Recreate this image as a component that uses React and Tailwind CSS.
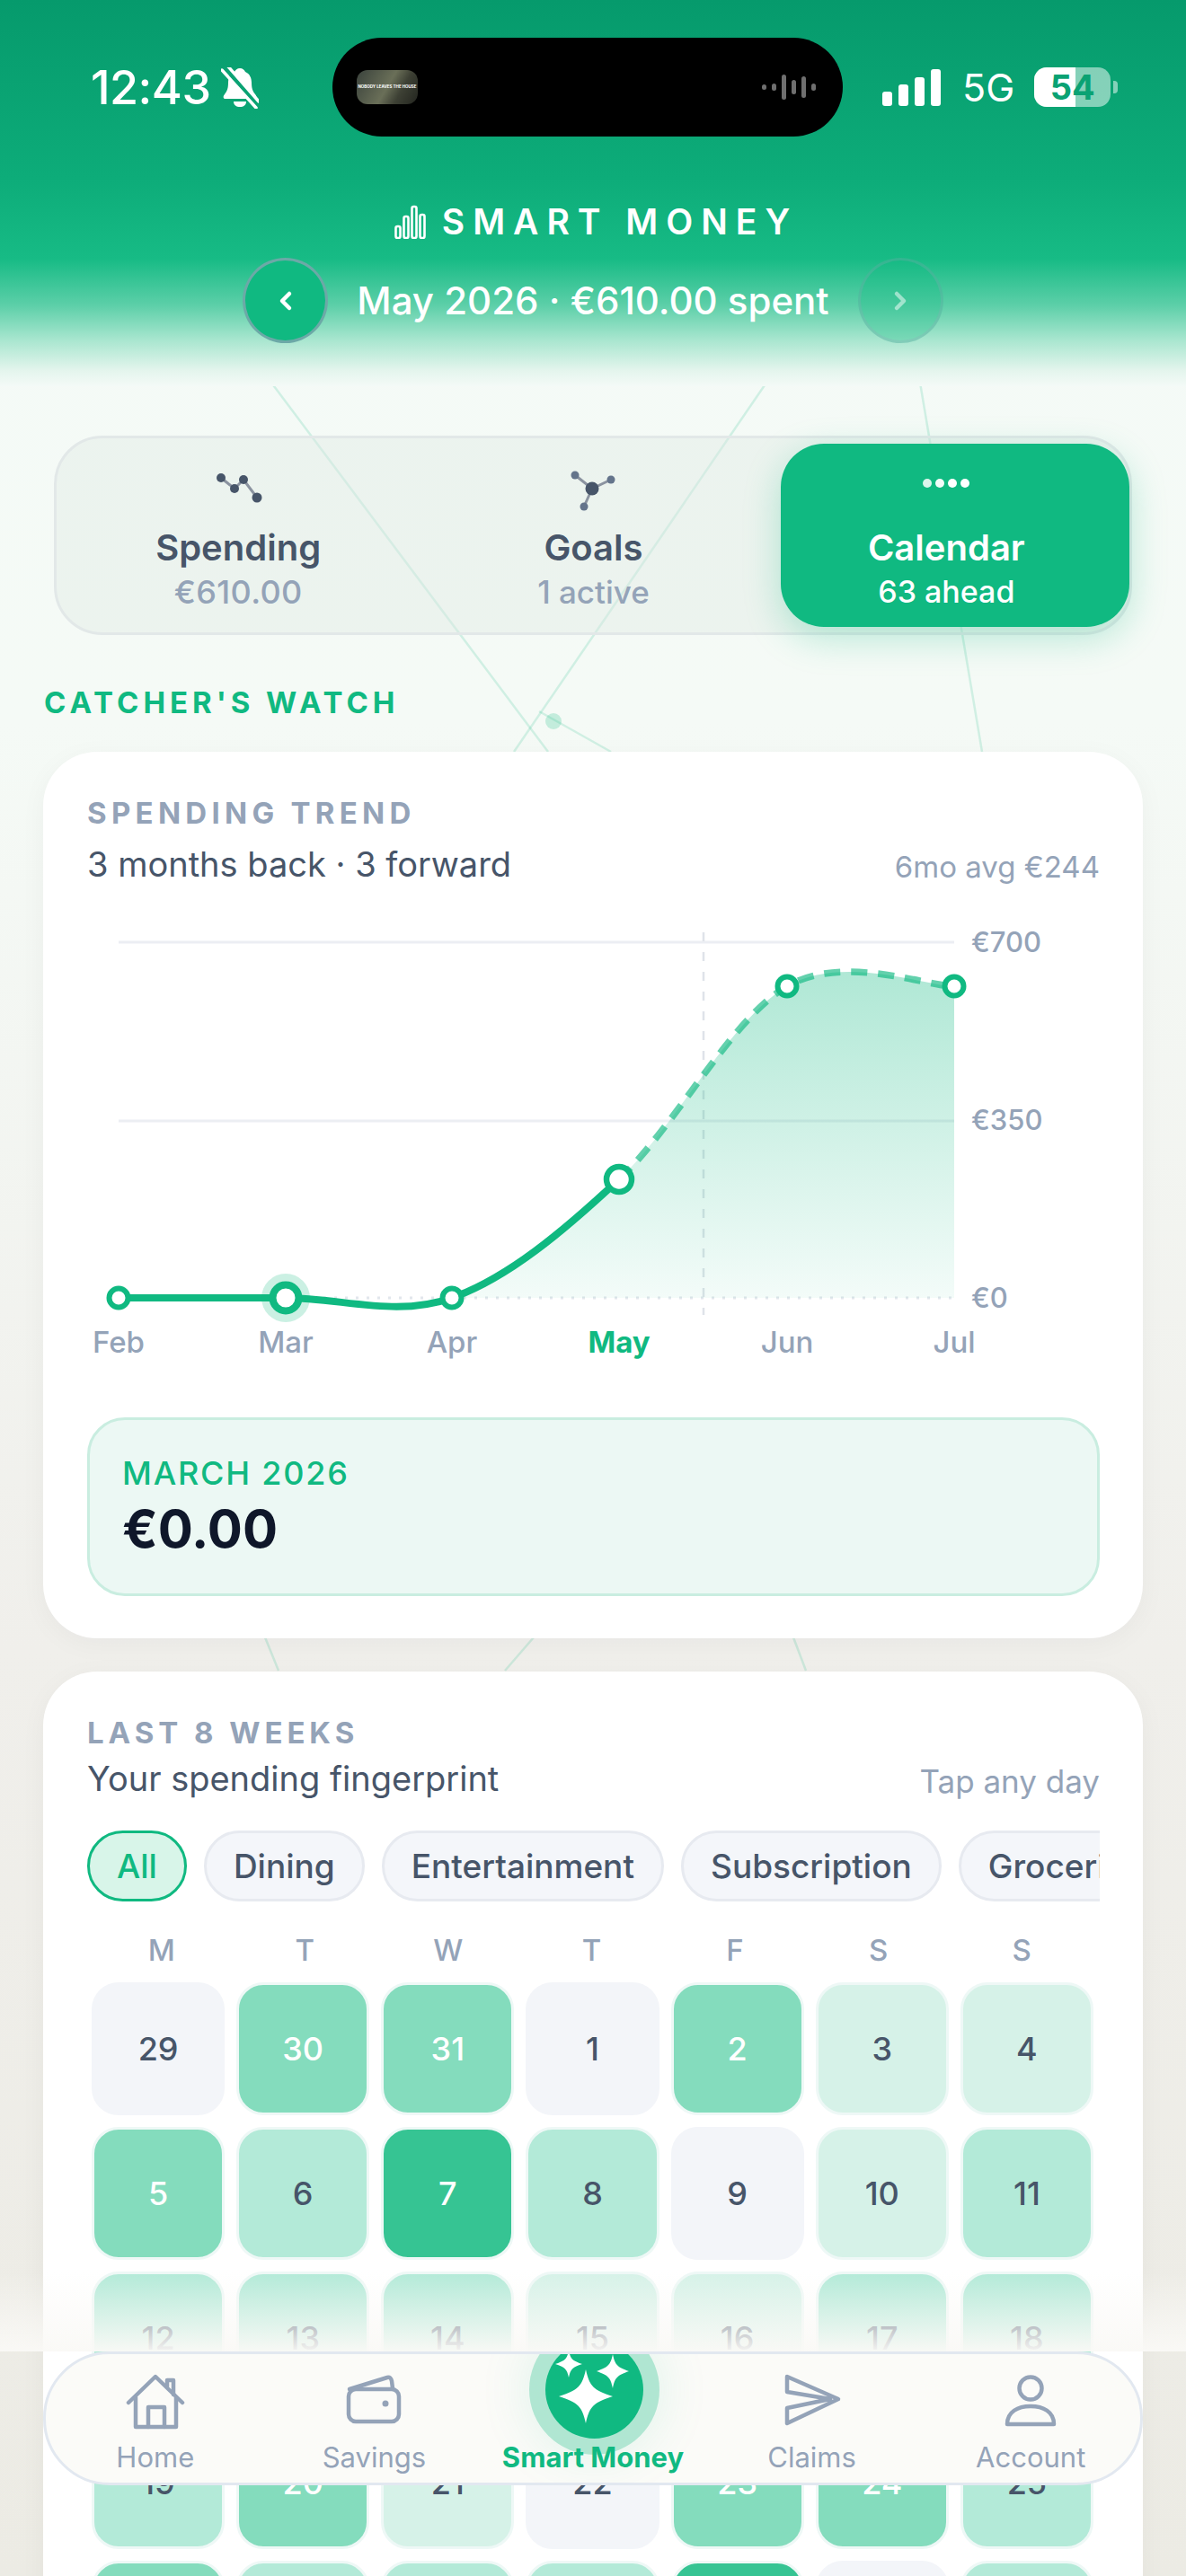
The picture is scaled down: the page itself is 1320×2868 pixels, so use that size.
const cellStyles = {
  g: 'bg-[#f3f5f9] border-[#f3f5f9] text-[#475569]',
  l: 'bg-[#d6f2e8] border-[#eef8f6] text-[#475569]',
  m: 'bg-[#b3ead8] border-[#eef8f6] text-[#475569]',
  h: 'bg-[#84dcbd] border-[#eef8f6] text-white',
  d: 'bg-[#36c493] border-[#eef8f6] text-white',
};

const rows = [
  [['29', 'g'], ['30', 'h'], ['31', 'h'], ['1', 'g'], ['2', 'h'], ['3', 'l'], ['4', 'l']],
  [['5', 'h'], ['6', 'm'], ['7', 'd'], ['8', 'm'], ['9', 'g'], ['10', 'l'], ['11', 'm']],
  [['12', 'm'], ['13', 'm'], ['14', 'm'], ['15', 'l'], ['16', 'l'], ['17', 'm'], ['18', 'm']],
  [['19', 'm'], ['20', 'h'], ['21', 'l'], ['22', 'g'], ['23', 'h'], ['24', 'h'], ['25', 'm']],
  [['26', 'h'], ['27', 'm'], ['28', 'm'], ['29', 'm'], ['30', 'd'], ['31', 'g'], ['1', 'm']],
];

function BellOff() {
  return (
    <svg width="42" height="46" viewBox="0 0 42 46" fill="none">
      <path d="M21 1c3 0 5 2 6 4 5 2 7 7 7 12 0 6 1 9 4 13 2 2 2 5 -1 5H5c-3 0-3-3-1-5 3-4 4-7 4-13 0-5 2-10 7-12 1-2 3-4 6-4Z" fill="#fff" />
      <path d="M14 38h14c0 4-3 6-7 6s-7-2-7-6Z" fill="#fff" />
      <path d="M3 -1 L40 41" stroke="#0aa273" strokeWidth="8" />
      <path d="M1 3 L39 45" stroke="#fff" strokeWidth="3.5" strokeLinecap="round" />
      <path d="M7 -2 L42 38" stroke="#fff" strokeWidth="3.5" strokeLinecap="round" />
    </svg>
  );
}

function StatusBar() {
  return (
    <div className="flex items-start h-[152px] pt-[42px] pl-[101px] relative">
      <div className="flex items-center h-[110px] w-[269px] gap-[11px] pt-[2px]">
        <span className="text-[52px] leading-[60px] font-medium text-white tracking-[-0.01em]">12:43</span>
        <BellOff />
      </div>
      <div className="w-[568px] h-[110px] rounded-[55px] bg-black flex items-center justify-between pl-[27px] pr-[30px]">
        <div className="w-[68px] h-[38px] rounded-[12px] overflow-hidden bg-[linear-gradient(120deg,#3a423c,#6a6f58_50%,#3d4034_70%,#23251f)] flex items-center justify-center">
          <span className="text-[4.5px] leading-[6px] font-bold text-white whitespace-nowrap">NOBODY LEAVES THE HOUSE</span>
        </div>
        <svg width="60" height="30" viewBox="0 0 60 30" fill="#6f6f6f">
          <rect x="0" y="12" width="5" height="6" rx="2.5" />
          <rect x="11" y="11" width="5" height="8" rx="2.5" />
          <rect x="22" y="1" width="5" height="28" rx="2.5" />
          <rect x="33" y="7" width="5" height="16" rx="2.5" />
          <rect x="44" y="3" width="5" height="24" rx="2.5" />
          <rect x="55" y="11" width="5" height="8" rx="2.5" />
        </svg>
      </div>
      <div className="flex items-center h-[110px] pl-[44px]">
        <svg width="65" height="41" viewBox="0 0 65 41" fill="#fff">
          <rect x="0" y="25" width="11" height="16" rx="3" />
          <rect x="18" y="17" width="11" height="24" rx="3" />
          <rect x="36" y="9" width="11" height="32" rx="3" />
          <rect x="54" y="0" width="11" height="41" rx="3" />
        </svg>
        <span className="ml-[24px] text-[43px] leading-[50px] font-normal text-white">5G</span>
        <div className="relative ml-[22px] w-[85px] h-[44px] rounded-[14px] bg-white/50 overflow-hidden flex items-center justify-center">
          <div className="absolute left-0 top-0 bottom-0 w-[46px] bg-white" />
          <span className="relative text-[38px] leading-[44px] font-bold text-[#0aa273]">54</span>
        </div>
        <div className="ml-[3px] w-[5px] h-[14px] rounded-r-[4px] bg-white/50" />
      </div>
    </div>
  );
}

function Header() {
  return (
    <header className="h-[430px] bg-[linear-gradient(180deg,#069a6c_0%,#0dac79_46%,#17bb85_67%,#5ccfa8_79%,#a8e6cf_88%,#e4f5ed_96%,#f4faf7_100%)]">
      <StatusBar />
      <div className="mt-[72px] flex justify-center items-center h-[46px] gap-[18px] pr-[3px]">
        <svg width="35" height="38" viewBox="0 0 35 38" fill="none" stroke="#fff" strokeWidth="2.6">
          <rect x="1.5" y="24" width="5" height="13" rx="2" />
          <rect x="10.5" y="13" width="5" height="24" rx="2" />
          <rect x="19.5" y="2" width="5" height="35" rx="2" />
          <rect x="28.5" y="11" width="5" height="26" rx="2" />
        </svg>
        <span className="text-[39px] leading-[46px] font-semibold text-white tracking-[0.23em] mr-[-10px]">SMART MONEY</span>
      </div>
      <div className="mt-[17px] flex justify-center items-center gap-[32px]">
        <div className="w-[95px] h-[95px] rounded-full bg-[#10b981] border-[3px] border-[#94a3b8]/70 flex items-center justify-center text-white">
          <svg width="20" height="30" viewBox="0 0 20 30" fill="none" stroke="#fff" strokeWidth="4.5" strokeLinecap="round" strokeLinejoin="round"><path d="M14 7 L6 15 L14 23" /></svg>
        </div>
        <span className="text-[42px] leading-[60px] font-medium text-white whitespace-nowrap">May 2026 · €610.00 spent</span>
        <div className="w-[95px] h-[95px] rounded-full bg-[#10b981]/30 border-[3px] border-[#94a3b8]/25 flex items-center justify-center">
          <svg width="20" height="30" viewBox="0 0 20 30" fill="none" stroke="#ffffff" strokeOpacity="0.5" strokeWidth="4.5" strokeLinecap="round" strokeLinejoin="round"><path d="M6 7 L14 15 L6 23" /></svg>
        </div>
      </div>
    </header>
  );
}

function Tabs() {
  return (
    <div className="mt-[55px] mx-[60px] h-[222px] rounded-[54px] border-[3px] border-[#e2e8e8] bg-[#dfe8e4]/40 flex pl-[5px] py-[6px]">
      <div className="w-[395px] flex flex-col items-center pt-[26px]">
        <svg width="60" height="60" viewBox="0 0 60 60">
          <path d="M11 12 L26 24 L36 14 L51 34" fill="none" stroke="#8b93a0" strokeWidth="3" />
          <circle cx="11" cy="12" r="5" fill="#475569" />
          <circle cx="26" cy="24" r="5" fill="#475569" />
          <circle cx="36" cy="14" r="5" fill="#475569" />
          <circle cx="51" cy="34" r="5.5" fill="#475569" />
        </svg>
        <span className="mt-[6px] text-[40px] leading-[48px] font-semibold text-[#475569]">Spending</span>
        <span className="text-[36px] leading-[50px] font-medium text-[#94a3b8] tracking-[0.01em]">€610.00</span>
      </div>
      <div className="w-[395px] flex flex-col items-center pt-[26px] pl-[2px]">
        <svg width="60" height="60" viewBox="0 0 60 60">
          <path d="M10 9 L29 24 L50 14 M29 24 L20 44" fill="none" stroke="#8b93a0" strokeWidth="3" />
          <circle cx="29" cy="24" r="7.5" fill="#475569" />
          <circle cx="10" cy="9" r="4.5" fill="#64748b" />
          <circle cx="50" cy="14" r="4.5" fill="#64748b" />
          <circle cx="20" cy="44" r="4.5" fill="#64748b" />
        </svg>
        <span className="mt-[6px] text-[40px] leading-[48px] font-semibold text-[#475569]">Goals</span>
        <span className="text-[35px] leading-[50px] font-medium text-[#94a3b8]">1 active</span>
      </div>
      <div className="ml-[12px] w-[389px] flex flex-col items-center pt-[26px] pr-[19px] h-[204px] bg-[#10b981] rounded-[48px] shadow-[0_12px_40px_rgba(16,185,129,0.28)]">
        <svg width="60" height="60" viewBox="0 0 60 60" fill="#fff">
          <circle cx="9" cy="18" r="5" opacity="0.85" />
          <circle cx="23" cy="18" r="5" opacity="0.95" />
          <circle cx="37" cy="18" r="5" />
          <circle cx="51" cy="18" r="5" />
        </svg>
        <span className="mt-[6px] text-[40px] leading-[48px] font-semibold text-white">Calendar</span>
        <span className="text-[34px] leading-[50px] font-medium text-white">63 ahead</span>
      </div>
    </div>
  );
}

function Chart() {
  const labels = [['Feb', 132], ['Mar', 318], ['Apr', 503], ['May', 689], ['Jun', 876], ['Jul', 1062]];
  const solid = 'M132 1445 C163 1445 256 1445 318 1445 C380 1445 441 1467 503 1445 C565 1423 627 1371 689 1313';
  const dashed = 'M689 1313 C751 1255 814 1134 876 1098 C938 1062 1031 1098 1062 1098';
  const area = 'M503 1445 C565 1423 627 1371 689 1313 C751 1255 814 1134 876 1098 C938 1062 1031 1098 1062 1098 L1062 1445 Z';
  return (
    <svg className="mt-[40px] block" width="1127" height="490" viewBox="97 1030 1127 490">
      <defs>
        <linearGradient id="fill" x1="0" y1="1085" x2="0" y2="1445" gradientUnits="userSpaceOnUse">
          <stop offset="0" stopColor="#10b981" stopOpacity="0.33" />
          <stop offset="1" stopColor="#10b981" stopOpacity="0.05" />
        </linearGradient>
      </defs>
      <path d="M132 1049 H1062 M132 1248 H1062" stroke="#eceef3" strokeWidth="3" />
      <path d="M132 1445 H1062" stroke="#e2e6ec" strokeWidth="3" strokeDasharray="3 9" />
      <path d="M783 1038 V1464" stroke="#dfe3e9" strokeWidth="2.5" strokeDasharray="10 12" />
      <path d={area} fill="url(#fill)" />
      <path d={solid} fill="none" stroke="#10b981" strokeWidth="8" strokeLinecap="round" />
      <path d={dashed} fill="none" stroke="#10b981" strokeOpacity="0.65" strokeWidth="7.5" strokeDasharray="18 12" strokeLinecap="butt" />
      <circle cx="318" cy="1445" r="27" fill="#10b981" fillOpacity="0.22" />
      <circle cx="132" cy="1445" r="10.5" fill="#fff" stroke="#10b981" strokeWidth="6" />
      <circle cx="318" cy="1445" r="14.5" fill="#fff" stroke="#10b981" strokeWidth="8" />
      <circle cx="503" cy="1445" r="10.5" fill="#fff" stroke="#10b981" strokeWidth="6" />
      <circle cx="689" cy="1313" r="14" fill="#fff" stroke="#10b981" strokeWidth="6.5" />
      <circle cx="876" cy="1098" r="10.5" fill="#fff" stroke="#10b981" strokeWidth="6" />
      <circle cx="1062" cy="1098" r="10.5" fill="#fff" stroke="#10b981" strokeWidth="6" />
      <g fontSize="31" fill="#94a3b8" fontWeight="500">
        <text x="1081" y="1060">€700</text>
        <text x="1081" y="1258">€350</text>
        <text x="1081" y="1456">€0</text>
      </g>
      {labels.map(([t, x]) => (
        <text key={t} x={x} y="1506" textAnchor="middle" fontSize="33" fontWeight={t === 'May' ? 700 : 500} fill={t === 'May' ? '#10b981' : '#94a3b8'}>{t}</text>
      ))}
    </svg>
  );
}

function TrendCard() {
  return (
    <section className="mt-[35px] mx-[48px] bg-white rounded-[60px] pt-[48px] pb-[47px] pl-[49px] pr-[48px] shadow-[0_6px_30px_rgba(15,23,42,0.04)]">
      <div className="text-[33px] leading-[40px] font-bold tracking-[0.16em] text-[#94a3b8]">SPENDING TREND</div>
      <div className="mt-[9px] flex justify-between items-center h-[56px]">
        <span className="text-[38px] leading-[56px] text-[#475569]">3 months back · 3 forward</span>
        <span className="text-[33px] leading-[56px] text-[#94a3b8] mt-[6px]">6mo avg €244</span>
      </div>
      <Chart />
      <div className="mt-[58px] h-[199px] rounded-[42px] border-[3px] border-[#c9ede0] bg-[#ecf8f4] pl-[36px] pt-[37px]">
        <div className="text-[36px] leading-[44px] font-medium tracking-[0.05em] text-[#10b981]">MARCH 2026</div>
        <div className="mt-[4px] text-[58px] leading-[72px] font-bold text-[#0f172a]">€0.00</div>
      </div>
    </section>
  );
}

function CalendarCard() {
  const chips = ['Dining', 'Entertainment', 'Subscription', 'Groceries', 'Transport'];
  return (
    <section className="mt-[37px] mx-[48px] bg-white rounded-[60px] pt-[48px] pl-[49px] pr-[48px] pb-[48px] shadow-[0_6px_30px_rgba(15,23,42,0.04)]">
      <div className="text-[33px] leading-[40px] font-bold tracking-[0.15em] text-[#94a3b8]">LAST 8 WEEKS</div>
      <div className="mt-[3px] flex justify-between items-center h-[56px]">
        <span className="text-[38px] leading-[56px] text-[#475569]">Your spending fingerprint</span>
        <span className="text-[35px] leading-[56px] text-[#94a3b8] mt-[6px]">Tap any day</span>
      </div>
      <div className="mt-[30px] flex gap-[19px] overflow-hidden">
        <span className="shrink-0 h-[79px] flex items-center px-[30px] rounded-full border-[3px] border-[#10b981] bg-[#d8f5e9] text-[37px] font-medium text-[#10b981]">All</span>
        {chips.map((c) => (
          <span key={c} className="shrink-0 h-[79px] flex items-center px-[30px] rounded-full border-[3px] border-[#e7eaf0] bg-[#f4f6fa] text-[37px] font-medium text-[#475569]">{c}</span>
        ))}
      </div>
      <div className="mt-[34px] ml-[3px] w-[1117px] grid grid-cols-7">
        {['M', 'T', 'W', 'T', 'F', 'S', 'S'].map((d, i) => (
          <span key={i} className="text-center text-[33px] leading-[40px] font-medium text-[#94a3b8]">{d}</span>
        ))}
      </div>
      <div className="mt-[16px] ml-[5px] w-[1115px] grid grid-cols-7 gap-[13px]">
        {rows.flat().map(([n, k], i) => (
          <div key={i} className={`h-[148px] rounded-[30px] border-[3px] flex items-center justify-center text-[36px] font-medium ${cellStyles[k]}`}>{n}</div>
        ))}
      </div>
    </section>
  );
}

function Backdrop() {
  return (
    <svg className="absolute left-0 top-0" width="1320" height="2000" viewBox="0 0 1320 2000" fill="none" stroke="#10b981" strokeOpacity="0.16" strokeWidth="2.5">
      <path d="M302 426 L610 837" />
      <path d="M853 426 L572 837" />
      <path d="M1024 426 L1093 837" />
      <path d="M600 792 L680 837" />
      <circle cx="616" cy="803" r="9" fill="#10b981" fillOpacity="0.22" stroke="none" />
      <path d="M295 1823 L310 1860 M594 1823 L562 1860 M883 1823 L897 1860" />
    </svg>
  );
}

function Star({ cx, cy, w, h }) {
  const rx = w / 2;
  const ry = h / 2;
  const kx = rx * 0.28;
  const ky = ry * 0.24;
  return (
    <path
      fill="#fff"
      d={`M${cx} ${cy - ry} C${cx + kx * 0.5} ${cy - ky * 1.5} ${cx + kx} ${cy - ky} ${cx + rx} ${cy} C${cx + kx} ${cy + ky} ${cx + kx * 0.5} ${cy + ky * 1.5} ${cx} ${cy + ry} C${cx - kx * 0.5} ${cy + ky * 1.5} ${cx - kx} ${cy + ky} ${cx - rx} ${cy} C${cx - kx} ${cy - ky} ${cx - kx * 0.5} ${cy - ky * 1.5} ${cx} ${cy - ry} Z`}
    />
  );
}

function NavItem({ label, active, children }) {
  return (
    <div className="flex flex-col items-center relative">
      <div className="h-[90px] pt-[22px] flex items-start justify-center">{children}</div>
      <span className={`mt-[4px] text-[31px] leading-[42px] whitespace-nowrap ${active ? 'font-bold text-[#10b981]' : 'font-normal text-[#94a3b8]'}`}>{label}</span>
    </div>
  );
}

function BottomNav() {
  const s = { fill: 'none', stroke: '#94a3b8', strokeWidth: 4.5, strokeLinejoin: 'round', strokeLinecap: 'round' };
  return (
    <>
      <div className="absolute left-0 right-0 top-[2530px] h-[88px] bg-[linear-gradient(180deg,rgba(250,249,246,0)_0%,rgba(250,249,246,0.97)_100%)]" />
      <nav className="absolute left-[48px] top-[2618px] w-[1224px] h-[149px] rounded-[74px] border-[3px] border-[#e2e8f0] bg-[#fbfbf8] overflow-hidden grid grid-cols-5">
        <div className="absolute left-[538px] top-[-33px] w-[145px] h-[145px] rounded-full bg-[#b0e6d2] shadow-[0_0_60px_rgba(16,185,129,0.12)]" />
        <div className="absolute left-[556px] top-[-15px] w-[109px] h-[109px] rounded-full bg-[#10b981]" />
        <svg className="absolute left-[556px] top-[0px]" width="109" height="90" viewBox="556 0 109 90">
          <Star cx={601} cy={47} w={60} h={60} />
          <Star cx={631} cy={19} w={36} h={38} />
          <Star cx={582} cy={11} w={30} h={30} />
        </svg>
        <NavItem label="Home">
          <svg width="66" height="62" viewBox="0 0 66 62" {...s}>
            <path d="M3 32 L33 3 L63 32" />
            <path d="M46 14 V7 H53 V23" />
            <path d="M11 26 V59 H56 V26" />
            <path d="M25 59 V37 H43 V59" />
          </svg>
        </NavItem>
        <NavItem label="Savings">
          <svg width="62" height="56" viewBox="0 0 62 56" {...s}>
            <rect x="3" y="17" width="56" height="36" rx="8" />
            <path d="M4 17 L46 4 Q50 3 51 8 L52 16" />
            <circle cx="44" cy="33" r="3.5" fill="#94a3b8" stroke="none" />
          </svg>
        </NavItem>
        <NavItem label="Smart Money" active>
          <div className="w-[62px] h-[60px]" />
        </NavItem>
        <NavItem label="Claims">
          <svg width="64" height="58" viewBox="0 0 64 58" {...s}>
            <path d="M4 3 L61 28 L4 55 V38 L52 28 L4 20 Z" />
          </svg>
        </NavItem>
        <NavItem label="Account">
          <svg width="58" height="60" viewBox="0 0 58 60" {...s}>
            <circle cx="29" cy="16" r="12.5" />
            <path d="M3 56 C3 42 15 36 29 36 C43 36 55 42 55 56 Z" />
          </svg>
        </NavItem>
      </nav>
    </>
  );
}

export default function App() {
  return (
    <div className="relative w-[1320px] h-[2868px] overflow-hidden [font-family:Inter,sans-serif] bg-[linear-gradient(180deg,#f4faf7_0%,#f5faf6_28%,#f0efeb_64%,#ecebe4_100%)]">
      <Backdrop />
      <div className="relative">
        <Header />
        <Tabs />
        <div className="mt-[55px] ml-[49px] text-[33px] leading-[40px] font-bold tracking-[0.15em] text-[#10b981]">CATCHER'S WATCH</div>
        <TrendCard />
        <CalendarCard />
      </div>
      <BottomNav />
    </div>
  );
}
